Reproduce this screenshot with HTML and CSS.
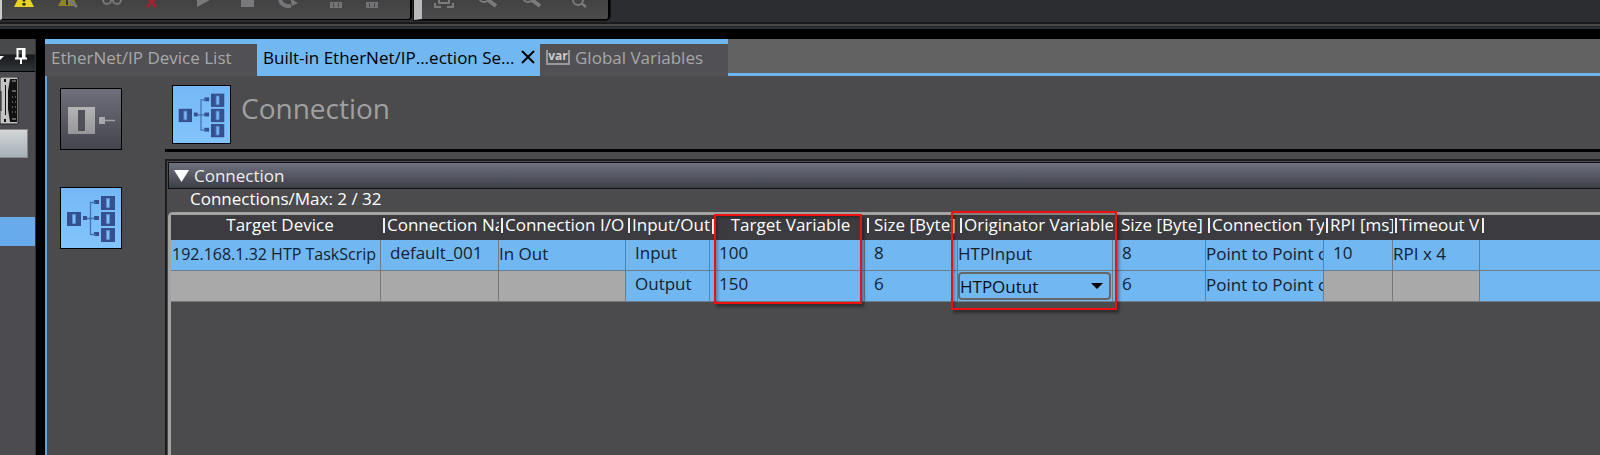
FILE: index.html
```html
<!DOCTYPE html>
<html lang="en">
<head>
<meta charset="utf-8">
<title>Connection Settings</title>
<link rel="stylesheet" href="styles.css">
</head>
<body>
<svg class="defs" aria-hidden="true">
  <defs>
    <linearGradient id="metal" x1="0" y1="0" x2="0" y2="1"><stop offset="0" stop-color="#b4b4b6"/><stop offset="1" stop-color="#97979b"/></linearGradient>
    <symbol id="tree" viewBox="0 0 58 58">
      <g fill="#34508f">
        <rect x="5" y="23" width="14" height="14"/>
        <rect x="39" y="7" width="14" height="14"/>
        <rect x="39" y="23" width="14" height="14"/>
        <rect x="39" y="39" width="14" height="14"/>
        <rect x="21" y="27" width="4" height="4"/>
        <rect x="32" y="11" width="5" height="4"/>
        <rect x="32" y="27" width="5" height="4"/>
        <rect x="32" y="43" width="5" height="4"/>
      </g>
      <g fill="#7cbffa" stroke="#5a8bcb">
        <rect x="10.500" y="25.500" width="3" height="9"/>
        <rect x="44.500" y="9.500" width="3" height="9"/>
        <rect x="44.500" y="25.500" width="3" height="9"/>
        <rect x="44.500" y="41.500" width="3" height="9"/>
      </g>
      <path d="M25 29.500H33M34 13.500H28.500V45.500H34" fill="none" stroke="#4470b4" stroke-width="1.300"/>
    </symbol>
  </defs>
</svg>
<div class="app">
  <header class="toolbar">
    <div class="tool-group first">
      <button class="tool" aria-label="Errors"><svg viewBox="0 0 24 23"><path d="M7-3H17L22 7H2Z" fill="#e8d31f"/><path d="M10.500 0h3l-.500 1.500h-2zM10.500 3h3v2.500h-3z" fill="#222"/></svg></button>
      <button class="tool g20" aria-label="Clear errors"><svg viewBox="0 0 24 23"><path d="M7-3H17L21 6H2Z" fill="#8f8326"/><path d="M10 0h2v5h-2z" fill="#333"/><path d="M11-2L21 7" stroke="#77777a" stroke-width="3"/></svg></button>
      <button class="tool g20" aria-label="Watch"><svg viewBox="0 0 24 23"><g fill="none" stroke="#77777a" stroke-width="2"><circle cx="7" cy="0" r="4"/><circle cx="17" cy="0" r="4"/><path d="M11 0h2"/></g></svg></button>
      <button class="tool g16" aria-label="Delete"><svg viewBox="0 0 24 23"><path d="M7-3L16 7M17-3L7 7" stroke="#9e2434" stroke-width="3"/></svg></button>
      <button class="tool g28" aria-label="Run"><svg viewBox="0 0 24 23"><path d="M5-7L18 0L5 7Z" fill="#79797b"/></svg></button>
      <button class="tool g20" aria-label="Stop"><svg viewBox="0 0 24 23"><path d="M5-5H18V7H5Z" fill="#79797b"/></svg></button>
      <button class="tool g16" aria-label="Reset"><svg viewBox="0 0 24 23"><path d="M4-2A8 8 0 0 0 15 5.500" fill="none" stroke="#77777a" stroke-width="4"/><path d="M14-2L22 3L16 6Z" fill="#77777a"/></svg></button>
      <button class="tool g24" aria-label="Monitor"><svg viewBox="0 0 24 23"><path d="M6 2H18V8H6Z" fill="#737375"/><path d="M9.500 3V7M14.500 3V7" stroke="#484848"/></svg></button>
      <button class="tool g12" aria-label="Stop monitor"><svg viewBox="0 0 24 23"><path d="M6 2H18V8H6Z" fill="#737375"/><path d="M9.500 3V7M14.500 3V7" stroke="#484848"/></svg></button>
    </div>
    <div class="tool-group second">
      <button class="tool" aria-label="Fit"><svg viewBox="0 0 24 23"><path d="M3 3V7H9M15 7H21V3M7-3V3H17V-3" fill="none" stroke="#7b7b7e" stroke-width="2"/></svg></button>
      <button class="tool g20" aria-label="Zoom in"><svg viewBox="0 0 24 23"><circle cx="8" cy="-3" r="5" fill="none" stroke="#7b7b7e" stroke-width="2"/><path d="M12 0L20 6" stroke="#7b7b7e" stroke-width="4"/></svg></button>
      <button class="tool g20" aria-label="Zoom out"><svg viewBox="0 0 24 23"><circle cx="8" cy="-3" r="5" fill="none" stroke="#7b7b7e" stroke-width="2"/><path d="M12 0L20 6" stroke="#7b7b7e" stroke-width="4"/></svg></button>
      <button class="tool g24" aria-label="Zoom reset"><svg viewBox="0 0 24 23"><circle cx="10" cy="0" r="5" fill="none" stroke="#7b7b7e" stroke-width="2"/><path d="M13 3L18 7" stroke="#7b7b7e" stroke-width="2.500"/></svg></button>
    </div>
  </header>
  <div class="workspace">
    <aside class="dock">
      <div class="dock-head"><svg viewBox="0 0 35 32" width="35" height="32"><path d="M0 17H4L0 21Z" fill="#fff"/><path d="M17.500 19V10H24.500V19M15 19.500H27M21 20V25" fill="none" stroke="#fff" stroke-width="2"/><path d="M23 10V19" stroke="#fff" stroke-width="2"/></svg></div>
      <svg class="device" viewBox="0 0 19 48" width="19" height="48"><path d="M0 0H18V47H0Z" fill="#c4c4c4" stroke="#222"/><path d="M10 2H17V45H10L8 32V14Z" fill="#111"/><path d="M1 14V34M5.500 8V38" stroke="#111"/><path d="M5 2V5M5 42V45" stroke="#111" stroke-width="2"/><path d="M12 4H16M12 14H16M12 42H16" stroke="#aaa"/><path d="M12 20H16M12 25H16M12 30H16M12 35H16" stroke="#999" stroke-dasharray="1 2"/></svg>
      <div class="dock-button"></div>
      <div class="dock-selected"></div>
    </aside>
    <main class="editor">
      <nav class="tabs">
        <button class="tab tab-list">EtherNet/IP Device List</button>
        <button class="tab active">Built-in EtherNet/IP...ection Se...<svg viewBox="0 0 14 14" width="14" height="14"><path d="M1 1L13 13M13 1L1 13" stroke="#000" stroke-width="2"/></svg></button>
        <button class="tab tab-vars"><span class="var">var</span>Global Variables</button>
        <div class="tab-fill"></div>
      </nav>
      <div class="page">
        <div class="side">
          <button class="view" aria-label="Device settings"><svg viewBox="0 0 58 58"><path d="M6 17H33V44H6Z" fill="url(#metal)"/><path d="M16 20H23V41H16Z" fill="#505059"/><path d="M37 27H43V34H37Z" fill="#a8a8ab"/><path d="M43 30.500H53" stroke="#a0a0a4" stroke-width="1.500"/></svg></button>
          <button class="view selected" aria-label="Connection settings"><svg><use href="#tree"/></svg></button>
        </div>
        <section class="content">
          <div class="title"><span class="badge"><svg><use href="#tree"/></svg></span><h1>Connection</h1></div>
          <div class="panel">
            <button class="bar" aria-expanded="true"><svg viewBox="0 0 15 12" width="15" height="12"><path d="M0 0H15L7.500 12Z" fill="#fff"/></svg>Connection</button>
            <p class="count">Connections/Max: 2 / 32</p>
            <div class="grid">
              <table>
                <colgroup><col class="w210"><col class="w118"><col class="w127"><col class="w84"><col class="w155"><col class="w93"><col class="w155"><col class="w93"><col class="w118"><col class="w69"><col class="w87"><col></colgroup>
                <thead><tr>
                  <th class="mid">Target Device</th><th class="sep">Connection Name</th><th class="sep">Connection I/O</th><th class="sep">Input/Output</th><th class="sep mid">Target Variable</th><th class="sep wide">Size [Byte]</th><th class="sep">Originator Variable</th><th class="near">Size [Byte]</th><th class="sep">Connection Type</th><th class="sep">RPI [ms]</th><th class="sep">Timeout Value</th><th class="sep"></th>
                </tr></thead>
                <tbody>
                  <tr><td class="device-name">192.168.1.32 HTP TaskScrip</td><td class="edit">default_001</td><td>In Out</td><td class="edit">Input</td><td class="edit value">100</td><td class="edit">8</td><td>HTPInput</td><td class="edit">8</td><td>Point to Point connection</td><td class="edit">10</td><td>RPI x 4</td><td></td></tr>
                  <tr><td class="off"></td><td class="off"></td><td class="off"></td><td class="edit">Output</td><td class="edit value">150</td><td class="edit">6</td><td class="pick"><select aria-label="Originator variable"><option>HTPOutut</option><option>HTPInput</option></select><svg viewBox="0 0 12 6" width="12" height="6"><path d="M0 0H12L6 6Z"/></svg></td><td class="edit">6</td><td>Point to Point connection</td><td class="off"></td><td class="off"></td><td></td></tr>
                </tbody>
              </table>
              <div class="mark mark-target"></div>
              <div class="mark mark-originator"></div>
            </div>
          </div>
        </section>
      </div>
    </main>
  </div>
</div>
</body>
</html>
```

FILE: styles.css
```css
* { box-sizing: border-box; }
body { margin: 0; background: #000; font-family: "Open Sans", "Noto Sans", sans-serif; font-size: 17px; color: #fff; }
button, select { font: inherit; color: inherit; border: 0; padding: 0; margin: 0; background: none; }
svg { display: block; flex: none; }
.defs { position: absolute; width: 0; height: 0; }
.app { height: 100vh; display: flex; flex-direction: column; overflow: hidden; }

.toolbar { flex: none; height: 29px; display: flex; gap: 2px; background: linear-gradient(#2c2d31 0 22px, #1a1a1c 22px 24px, #47484a 24px 26px, #222528 26px 27px, #2d3236 27px); }
.tool-group { height: 20px; display: flex; background: linear-gradient(#424242, #4b4b4b); border: solid #000; border-width: 0 2px 1px 0; border-radius: 0 0 4px 0; }
.first { border-left: 2px solid #ccc; padding: 0 26px 0 10px; }
.second { border-left: 8px solid #b9b9bb; padding: 0 16px 0 10px; outline: 1px solid #111; }
.tool { width: 24px; height: 19px; overflow: hidden; }
.tool svg { width: 24px; height: 23px; }
.g12 { margin-left: 12px; }
.g16 { margin-left: 16px; }
.g20 { margin-left: 20px; }
.g24 { margin-left: 24px; }
.g28 { margin-left: 28px; }

.workspace { flex: 1; min-height: 0; display: flex; gap: 9px; padding-top: 10px; }
.dock { width: 36px; flex: none; background: #4c4b4f; border-right: 1px solid #333; }
.dock-head { height: 33px; background: linear-gradient(#48494b 0 15px, #17191b 16px, #303438); border-bottom: 1px solid #000; }
.device { margin-top: 5px; }
.dock-button { width: 28px; height: 29px; margin-top: 4px; background: linear-gradient(#d4d6d8, #a5b0b8); border: 1px solid #888; border-left: 0; }
.dock-selected { height: 29px; margin-top: 59px; background: #68abed; }

.editor { flex: 1; min-width: 0; display: flex; flex-direction: column; background: #4b4b4d; }
.tabs { flex: none; height: 37px; display: flex; }
.tab { display: flex; align-items: center; border-top: 5px solid #71b7f1; background: #505055; color: #a8a8a8; padding: 0 8px 6px 6px; white-space: nowrap; }
.tab-list { width: 212px; }
.active { width: 283px; justify-content: space-between; background: #71b7f1; color: #000; padding-right: 5px; }
.tab-vars { width: 188px; gap: 5px; }
.var { width: 24px; height: 15px; border: 2px solid #999; border-top: 0; font: bold 12px/11px "Open Sans", sans-serif; text-align: center; color: #ccc; }
.tab-fill { flex: 1; background: #626263; border-bottom: 3px solid #6db4f0; }

.page { flex: 1; min-height: 0; display: flex; border-left: 2px solid #65a1d8; }
.side { width: 118px; flex: none; padding: 12px 0 0 13px; display: flex; flex-direction: column; gap: 37px; }
.view { width: 62px; height: 62px; border: 1px solid #000; padding: 1px; background: linear-gradient(#70707c, #43444c); }
.view svg, .badge svg { width: 100%; height: 100%; }
.selected, .badge { background: linear-gradient(#74b8f5, #83c4fc); border: 1px solid #000; }
.content { flex: 1; min-width: 0; display: flex; flex-direction: column; }
.title { height: 76px; flex: none; display: flex; gap: 10px; padding: 9px 0 0 7px; border-bottom: 3px solid #000; }
.badge { width: 59px; height: 59px; padding: 1px; }
h1 { margin: 0; font-size: 28px; line-height: 46px; font-weight: 400; color: #a0a0a0; }
.panel { flex: 1; min-height: 0; margin-top: 7px; border-top: 2px solid #1e1c22; border-left: 2px solid #1e1c22; padding: 1px 0 0 1px; display: flex; flex-direction: column; }
.bar { flex: none; height: 27px; display: flex; align-items: center; gap: 5px; padding-left: 5px; border: 1px solid #111; border-right: 0; background: linear-gradient(#707180, #3c3e46); color: #eee; }
.count { margin: 0; padding-left: 22px; height: 23px; line-height: 20px; }
.grid { flex: 1; position: relative; border: solid #a3a3a1; border-width: 3px 0 0 3px; border-radius: 5px 0 0 0; }
table { width: 100%; table-layout: fixed; border-collapse: separate; border-spacing: 0; }
.w210 { width: 210px; }
.w118 { width: 118px; }
.w127 { width: 127px; }
.w84 { width: 84px; }
.w155 { width: 155px; }
.w93 { width: 93px; }
.w69 { width: 69px; }
.w87 { width: 87px; }
th, td { padding: 0; overflow: hidden; white-space: nowrap; text-align: left; font-weight: 400; }
th { height: 25px; background: #3b3b40; line-height: 20px; padding-bottom: 5px; }
.sep::before { content: ""; display: inline-block; width: 2px; height: 15px; margin: 0 2px; vertical-align: -2px; background: #eee; }
.mid { text-align: center; padding-left: 8px; }
.sep.mid { padding-left: 0; }
.sep.mid::before { float: left; margin-top: 4px; }
.wide::before { margin-right: 5px; }
.near { padding-left: 8px; }
td { height: 31px; background: #71b7f1; color: #15212e; border: solid #6b7c8c; border-width: 0 1px 1px 0; padding: 0 0 2px; line-height: 26px; }
td:last-child { border-right: 0; }
.device-name { font-size: 16px; padding-left: 1px; }
.edit { padding: 0 0 5px 9px; line-height: 24px; }
.off { background: #a9a9a9; border-color: #777; }
.pick { position: relative; padding: 0 1px 0 0; }
.pick select { display: block; width: 100%; height: 28px; appearance: none; border: 2px solid #666; border-radius: 4px; color: #0c1118; padding: 0 0 3px; }
.pick svg { position: absolute; right: 9px; top: 12px; pointer-events: none; }
.mark { position: absolute; border: 2px solid #f01010; box-shadow: 2px 3px 3px #0006, inset 2px 2px 3px #0004; }
.mark-target { left: 543px; top: -1px; width: 148px; height: 90px; }
.mark-originator { left: 780px; top: -4px; width: 166px; height: 99px; }
```
